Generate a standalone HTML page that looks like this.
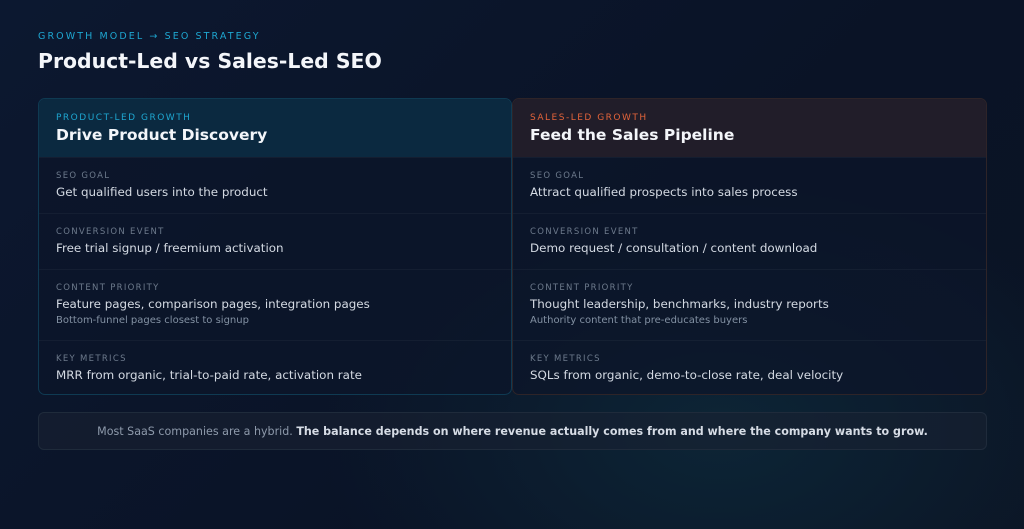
<!DOCTYPE html><html><head><style>
*{margin:0;padding:0;box-sizing:border-box}
body{width:1024px;height:529px;overflow:hidden;font-family:"DejaVu Sans","Liberation Sans",sans-serif;background:radial-gradient(ellipse 400px 250px at 720px 430px,#0d2536 0%,rgba(13,37,54,0) 100%),linear-gradient(135deg,#0c1830 0%,#0a1326 60%,#0b1424 100%);color:#e6ebf2;position:relative}
.eb{position:absolute;left:38px;top:31px;font-size:9.5px;letter-spacing:2.1px;color:#1ea6d0}
h1{position:absolute;left:38px;top:49px;font-size:20.4px;font-weight:bold;color:#f4f6fa}
.card{position:absolute;top:98px;height:297px;border-radius:7px;overflow:hidden;background:rgba(12,22,42,.75)}
.l{left:38px;width:474px;border:1px solid #0f3a52}
.r{left:512px;width:475px;border:1px solid #2e2428}
.hd{height:58px;padding:14px 17px 0}
.l .hd{background:#0b2940}
.r .hd{background:#211d29}
.ht{font-size:9px;letter-spacing:1.5px}
.l .ht{color:#1ea6d0}.r .ht{color:#e2633a}
.hn{font-size:15.5px;font-weight:bold;color:#f4f6fa;margin-top:3px}
.row{padding:13px 17px 0;border-top:1px solid rgba(255,255,255,.04)}
.lb{font-size:8.5px;letter-spacing:1.3px;color:#6d7a8c}
.v{font-size:11.9px;color:#d4dae3;margin-top:4px}
.s{font-size:10px;color:#8391a3;margin-top:4px}
.ft{position:absolute;left:38px;top:412px;width:949px;height:38px;border:1px solid #1f2b3b;border-radius:6px;background:rgba(25,34,50,.6);text-align:center;font-size:11.1px;line-height:37px;color:#8e9aab}
.ft b{color:#d6dce5}
</style></head><body>
<div class="eb">GROWTH MODEL → SEO STRATEGY</div>
<h1>Product-Led vs Sales-Led SEO</h1>
<div class="card l">
<div class="hd"><div class="ht">PRODUCT-LED GROWTH</div><div class="hn">Drive Product Discovery</div></div>
<div class="row" style="height:56px"><div class="lb">SEO GOAL</div><div class="v">Get qualified users into the product</div></div>
<div class="row" style="height:56px"><div class="lb">CONVERSION EVENT</div><div class="v">Free trial signup / freemium activation</div></div>
<div class="row" style="height:71px"><div class="lb">CONTENT PRIORITY</div><div class="v">Feature pages, comparison pages, integration pages</div><div class="s">Bottom-funnel pages closest to signup</div></div>
<div class="row" style="height:56px"><div class="lb">KEY METRICS</div><div class="v">MRR from organic, trial-to-paid rate, activation rate</div></div>
</div>
<div class="card r">
<div class="hd"><div class="ht">SALES-LED GROWTH</div><div class="hn">Feed the Sales Pipeline</div></div>
<div class="row" style="height:56px"><div class="lb">SEO GOAL</div><div class="v">Attract qualified prospects into sales process</div></div>
<div class="row" style="height:56px"><div class="lb">CONVERSION EVENT</div><div class="v">Demo request / consultation / content download</div></div>
<div class="row" style="height:71px"><div class="lb">CONTENT PRIORITY</div><div class="v">Thought leadership, benchmarks, industry reports</div><div class="s">Authority content that pre-educates buyers</div></div>
<div class="row" style="height:56px"><div class="lb">KEY METRICS</div><div class="v">SQLs from organic, demo-to-close rate, deal velocity</div></div>
</div>
<div class="ft">Most SaaS companies are a hybrid. <b>The balance depends on where revenue actually comes from and where the company wants to grow.</b></div>
</body></html>
